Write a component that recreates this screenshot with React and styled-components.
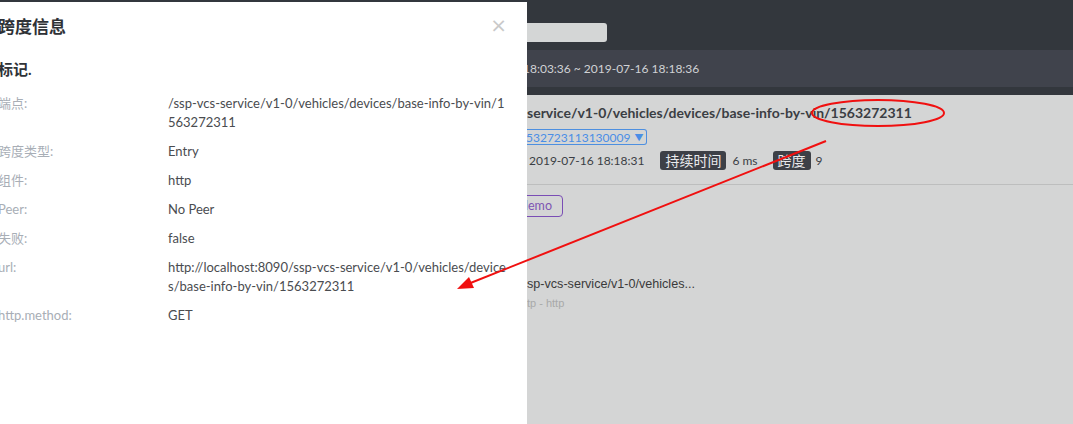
import React from "react";
import styled, { createGlobalStyle } from "styled-components";

const Global = createGlobalStyle`
  html, body {
    margin: 0;
    padding: 0;
    background: #d4d5d5;
  }
  body {
    font-family: Lato, "Noto Sans CJK SC", sans-serif;
    overflow: hidden;
  }
`;

const Page = styled.div`
  position: relative;
  width: 1073px;
  height: 424px;
  display: flex;
  overflow: hidden;
`;

const Drawer = styled.aside`
  width: 527px;
  flex: none;
  background: #fff;
  border-top: 2px solid #33373d;
  box-sizing: border-box;
  padding: 10px 0 0;
`;

const DrawerHead = styled.div`
  display: flex;
  align-items: center;
  justify-content: space-between;
  margin-left: -2px;
  padding-right: 20px;
  height: 26px;
`;

const DrawerTitle = styled.h2`
  margin: 0;
  font-size: 17px;
  font-weight: 700;
  color: #2f3237;
`;

const Close = styled.span`
  font-family: "DejaVu Sans", sans-serif;
  font-size: 20px;
  color: #c9c9c9;
  line-height: 1;
`;

const Section = styled.h3`
  margin: 20px 0 15px -2px;
  font-size: 15px;
  font-weight: 700;
  color: #2f3237;
`;

const Grid = styled.dl`
  margin: 0 0 0 -2px;
  display: grid;
  grid-template-columns: 170px 340px;
  row-gap: 10px;
  font-size: 13px;
  line-height: 19px;
`;

const Label = styled.dt`
  color: #a8aeb6;
`;

const Value = styled.dd`
  margin: 0;
  color: #4a4c50;
  word-break: break-all;
`;

const Backdrop = styled.main`
  flex: 1;
  display: flex;
  flex-direction: column;
  overflow: hidden;
`;

const TopBar = styled.header`
  height: 50px;
  background: #33373d;
  display: flex;
  align-items: center;
`;

const SearchBox = styled.div`
  width: 90px;
  height: 19px;
  margin-left: -10px;
  margin-top: 15px;
  background: #d4d6d6;
  border-radius: 3px;
`;

const TimeBar = styled.div`
  height: 37px;
  background: #40434c;
  border-bottom: 8px solid #33373d;
  display: flex;
  align-items: center;
  font-size: 12px;
  color: #d0d2d5;
  white-space: nowrap;
  margin-left: -4px;
`;

const Content = styled.section`
  flex: 1;
  background: #d4d5d5;
  padding: 9px 0 0;
`;

const TraceTitle = styled.div`
  font-size: 14px;
  font-weight: 700;
  color: #3b3e44;
  height: 19px;
  white-space: nowrap;
`;

const TraceSelect = styled.div`
  display: inline-flex;
  align-items: center;
  gap: 4px;
  margin: 6px 0 0 -1px;
  height: 14px;
  padding: 0 3px 0 0;
  border: 1px solid #4d8fe0;
  border-left: none;
  border-radius: 0 3px 3px 0;
  font-size: 12px;
  color: #4a8ee6;
`;

const Caret = styled.span`
  font-size: 9px;
`;

const Meta = styled.div`
  display: flex;
  align-items: center;
  height: 19px;
  margin-top: 6px;
  margin-left: 2px;
  font-size: 12px;
  color: #3b3e44;
  white-space: nowrap;
`;

const Tag = styled.span`
  display: inline-block;
  background: #3d4047;
  color: #e9eaec;
  border-radius: 3px;
  padding: 0 5px;
  font-size: 14px;
  line-height: 19px;
  margin: 0 ${(p) => p.$after}px 0 ${(p) => p.$before}px;
`;

const Divider = styled.hr`
  border: none;
  border-top: 1px solid #bdbebe;
  margin: 14px 0 0;
`;

const ServiceTag = styled.span`
  display: inline-block;
  margin: 10px 0 0 -19px;
  padding: 0 10px 0 12px;
  height: 20px;
  line-height: 20px;
  border: 1px solid #7a4db5;
  border-radius: 4px;
  font-size: 12.5px;
  color: #7e55b3;
`;

const Item = styled.div`
  margin-top: 58px;
  font-family: "Liberation Sans", Arial, sans-serif;
`;

const ItemName = styled.div`
  font-size: 12.6px;
  color: #3a3a3a;
  line-height: 18px;
`;

const ItemSub = styled.div`
  font-size: 11px;
  color: #a8a9a9;
  line-height: 18px;
  margin-top: 1px;
`;

const Annotation = styled.svg`
  position: absolute;
  left: 0;
  top: 0;
  pointer-events: none;
`;

const rows = [
  ["端点:", "/ssp-vcs-service/v1-0/vehicles/devices/base-info-by-vin/1563272311"],
  ["跨度类型:", "Entry"],
  ["组件:", "http"],
  ["Peer:", "No Peer"],
  ["失败:", "false"],
  ["url:", "http://localhost:8090/ssp-vcs-service/v1-0/vehicles/devices/base-info-by-vin/1563272311"],
  ["http.method:", "GET"],
];

export default function App() {
  return (
    <>
      <Global />
      <Page>
        <Drawer>
          <DrawerHead>
            <DrawerTitle>跨度信息</DrawerTitle>
            <Close>×</Close>
          </DrawerHead>
          <Section>标记.</Section>
          <Grid>
            {rows.map(([k, v]) => (
              <React.Fragment key={k}>
                <Label>{k}</Label>
                <Value>{v}</Value>
              </React.Fragment>
            ))}
          </Grid>
        </Drawer>
        <Backdrop>
          <TopBar>
            <SearchBox />
          </TopBar>
          <TimeBar>18:03:36 ~ 2019-07-16 18:18:36</TimeBar>
          <Content>
            <TraceTitle>service/v1-0/vehicles/devices/base-info-by-vin/1563272311</TraceTitle>
            <TraceSelect>
              532723113130009 <Caret>▼</Caret>
            </TraceSelect>
            <Meta>
              2019-07-16 18:18:31
              <Tag $before={16} $after={6}>持续时间</Tag>
              6 ms
              <Tag $before={15} $after={5}>跨度</Tag>
              9
            </Meta>
            <Divider />
            <ServiceTag>demo</ServiceTag>
            <Item>
              <ItemName>sp-vcs-service/v1-0/vehicles...</ItemName>
              <ItemSub>tp - http</ItemSub>
            </Item>
          </Content>
        </Backdrop>
        <Annotation width="1073" height="424" viewBox="0 0 1073 424">
          <ellipse cx="878" cy="113" rx="66" ry="13" fill="none" stroke="#f01010" strokeWidth="2" />
          <line x1="826" y1="141" x2="468" y2="284" stroke="#f01010" strokeWidth="2" />
          <polygon points="457,289 469,277 474,288" fill="#f01010" />
        </Annotation>
      </Page>
    </>
  );
}
